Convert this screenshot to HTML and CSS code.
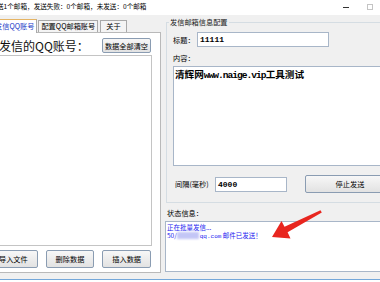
FILE: index.html
```html
<!DOCTYPE html>
<html lang="zh-CN">
<head>
    <meta charset="UTF-8">
    <title>QQ邮箱群发</title>
    <link rel="stylesheet" href="styles.css">
</head>
<body>
    <div class="titlebar">
        <span class="title">送1个邮箱，发送失败：0个邮箱，未发送：0个邮箱</span>
        <span class="controls"><span class="btn-min"></span><span class="btn-max"></span></span>
    </div>

    <div class="client">
        <div class="left">
            <div class="tabs">
                <span class="tab active">发信QQ账号</span>
                <span class="tab">配置QQ邮箱账号</span>
                <span class="tab tab-about">关于</span>
            </div>
            <div class="tabpage">
                <div class="page-head">
                    <span class="big-label">发信的QQ账号：</span>
                    <button class="win-btn head-btn">数据全部清空</button>
                </div>
                <div class="listbox"></div>
                <div class="btn-row">
                    <button class="win-btn">导入文件</button>
                    <button class="win-btn">删除数据</button>
                    <button class="win-btn">插入数据</button>
                </div>
            </div>
        </div>

        <div class="right">
            <fieldset class="group">
                <legend>发信邮箱信息配置</legend>
                <div class="field-row">
                    <label class="lbl-title">标题：</label>
                    <div class="textbox tb-title">11111</div>
                </div>
                <div class="lbl-content">内容：</div>
                <div class="content-box">清辉网<span class="mono">www.naige.vip</span>工具测试</div>
                <div class="field-row row-send">
                    <label class="lbl-interval">间隔(毫秒)</label>
                    <div class="textbox tb-interval">4000</div>
                    <button class="win-btn stop-btn">停止发送</button>
                </div>
            </fieldset>
            <div class="status-label">状态信息：</div>
            <div class="status-box">
                <div>正在批量发信...</div>
                <div>50/<span class="blur"></span><span class="mono-s">qq.com</span> 邮件已发送！</div>
            </div>
        </div>
    </div>
    <div class="frame-bottom"></div>

    <svg class="arrow" width="380" height="282" viewBox="0 0 380 282">
        <polygon points="272,237 281.5,221 284.5,226.8 320.5,210.3 321.8,212.6 287.6,232.3 290.5,238.5" fill="#e8261f"/>
    </svg>
</body>
</html>
```

FILE: styles.css
```css
body {
    margin: 0;
    width: 380px;
    height: 282px;
    overflow: hidden;
    position: relative;
    background: #fff;
    color: #000;
    font-family: "Noto Sans CJK SC", sans-serif;
    font-size: 7.2px;
}
.titlebar {
    height: 15px;
    display: flex;
    justify-content: space-between;
    background: #fff;
}
.title {
    margin-left: -3px;
    padding-top: 1px;
    font-size: 6.6px;
    line-height: 10px;
    white-space: nowrap;
}
.controls {
    display: flex;
    align-items: center;
    height: 14px;
    margin-right: 7px;
}
.btn-min {
    width: 6px;
    height: 1px;
    background: #333;
    margin-right: 18px;
}
.btn-max {
    width: 6px;
    height: 6px;
    border: 1px solid #c4c4c4;
    box-sizing: border-box;
    margin-bottom: 1px;
}
.client {
    display: flex;
    align-items: flex-start;
    height: 264px;
    background: #f0f0f0;
}
.left {
    flex: none;
    width: 181px;
    margin-left: -20px;
    padding-top: 4px;
}
.tabs {
    display: flex;
    align-items: flex-end;
    height: 13px;
    padding-left: 12px;
}
.tab {
    height: 11px;
    line-height: 11px;
    padding: 0 2px;
    margin-right: 1px;
    border: 1px solid #a9a9a9;
    border-bottom: none;
    background: #f4f4f4;
    white-space: nowrap;
}
.tab.active {
    height: 13px;
    line-height: 12px;
    margin-bottom: -1px;
    position: relative;
    background: #fff;
    color: #2340c8;
    border-top-color: #e6b463;
}
.tab-about {
    padding: 0 5px;
    margin-left: 1px;
}
.tabpage {
    height: 241px;
    box-sizing: border-box;
    border: 1px solid #b9b9b9;
    background: #fff;
    padding: 5px 8px 4px;
}
.page-head {
    display: flex;
    justify-content: space-between;
    align-items: center;
    height: 15px;
}
.big-label {
    margin-left: 10px;
    font-size: 12px;
    line-height: 15px;
    white-space: nowrap;
    color: #111;
}
.win-btn {
    font-family: "Noto Sans CJK SC", sans-serif;
    font-size: 7.2px;
    color: #000;
    width: 49px;
    height: 18px;
    padding: 0;
    border: 1px solid #8a9cb2;
    border-radius: 2px;
    background: linear-gradient(#f7f7f7, #e2e2e2);
}
.head-btn {
    height: 15px;
    margin-right: 1px;
}
.listbox {
    margin-top: 2px;
    height: 191px;
    box-sizing: border-box;
    border: 1px solid #c4c4c4;
    background: #fff;
}
.btn-row {
    display: flex;
    justify-content: flex-end;
    gap: 8px;
    margin-top: 4px;
    padding-right: 1px;
}
.right {
    flex: none;
    width: 240px;
    margin-left: 4px;
    padding-top: 2px;
}
.group {
    margin: 0 0 0 1px;
    padding: 5px 0 9px 6px;
    border: 1px solid #d5dde3;
}
.group legend {
    padding: 0 1px;
    margin-left: -4px;
    line-height: 10px;
    color: #222;
}
.field-row {
    display: flex;
    align-items: center;
}
.lbl-title {
    width: 24px;
    flex: none;
}
.textbox {
    height: 15px;
    box-sizing: border-box;
    border: 1px solid #a8b6c8;
    background: #fff;
    padding-left: 2px;
    font-family: "Liberation Mono", monospace;
    font-weight: bold;
    font-size: 8px;
    line-height: 13px;
}
.tb-title {
    width: 132px;
}
.lbl-content {
    margin-top: 6px;
    line-height: 10px;
}
.content-box {
    margin-top: 3px;
    height: 100px;
    box-sizing: border-box;
    border: 1px solid #a8b6c8;
    background: #fff;
    padding: 2px 1px;
    font-weight: bold;
    font-size: 9.6px;
    line-height: 11px;
}
.mono {
    font-family: "Liberation Mono", monospace;
    letter-spacing: -1px;
}
.row-send {
    margin-top: 9px;
}
.lbl-interval {
    width: 40px;
    margin-left: 2px;
    flex: none;
}
.tb-interval {
    width: 72px;
}
.stop-btn {
    width: 90px;
    margin-left: 18px;
}
.status-label {
    margin-top: 5px;
    padding-left: 2px;
    line-height: 10px;
}
.status-box {
    margin-top: 3px;
    height: 51px;
    box-sizing: border-box;
    border: 1px solid #a8b6c8;
    background: #fff;
    padding: 1px 1px;
    color: #2323f0;
    font-size: 6.5px;
    line-height: 8px;
    white-space: nowrap;
}
.blur {
    display: inline-block;
    width: 22px;
    height: 7px;
    margin: 0 1px -1px 0;
    background: #c3c6f6;
    filter: blur(0.8px);
}
.mono-s {
    font-family: "Liberation Mono", monospace;
    font-size: 6px;
}
.frame-bottom {
    height: 1px;
    background: #74a7d9;
}
.arrow {
    position: absolute;
    left: 0;
    top: 0;
    pointer-events: none;
}
```
